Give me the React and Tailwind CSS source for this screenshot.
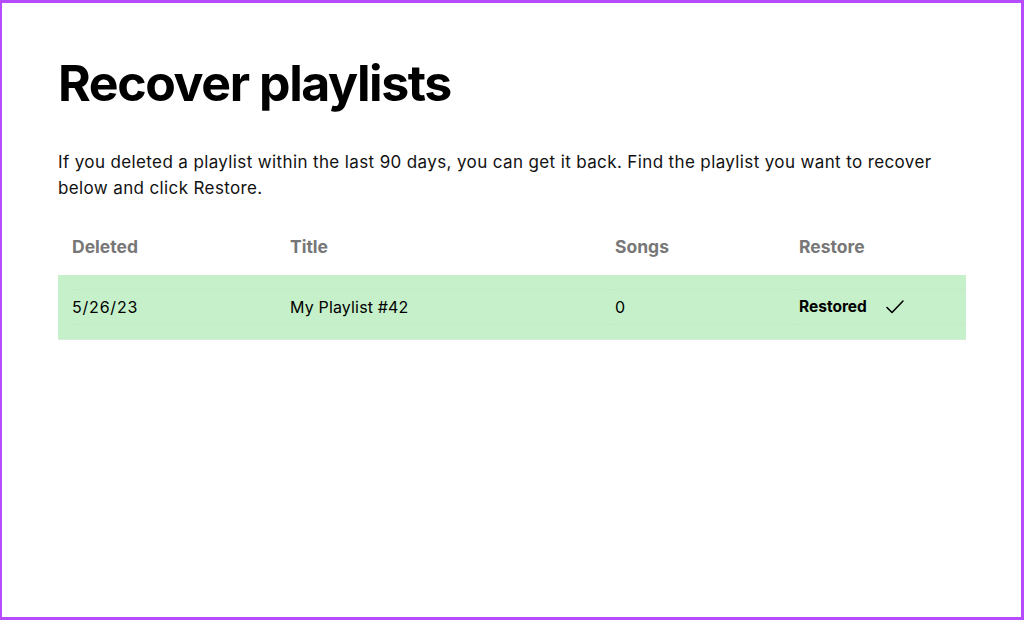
import React from 'react';

const rows = [
  { deleted: '5/26/23', title: 'My Playlist #42', songs: '0' },
];

const CheckIcon = () => (
  <svg width="20" height="16" viewBox="0 0 20 16" fill="none" stroke="#000" strokeWidth="1.6" strokeLinecap="round" strokeLinejoin="round">
    <path d="M2 8.5l5 5L18 2" />
  </svg>
);

const App = () => {
  return (
    <div className="h-[620px] w-[1024px] overflow-hidden bg-white border-[3px] border-l-2 border-[#b54cff] text-black" style={{ fontFamily: 'Inter, "Noto Sans", sans-serif' }}>
      <div className="pl-[56px] pr-[55px] pt-[50px]">
        <h1 className="text-[50px] font-bold leading-[60px] tracking-[-0.028em]">Recover playlists</h1>

        <p className="mt-[36px] text-[17px] leading-[26px] text-[#111] tracking-[0.022em]">
          If you deleted a playlist within the last 90 days, you can get it back. Find the playlist you want to recover below and click Restore.
        </p>

        <div className="mt-[18px]">
          <div className="grid grid-cols-[218px_325px_184px_1fr] pl-[14px] h-[56px] items-center text-[17.5px] font-bold text-[#777]">
            <div>Deleted</div>
            <div>Title</div>
            <div>Songs</div>
            <div>Restore</div>
          </div>
          {rows.map((row) => (
            <div key={row.title} className="bg-[#c6f0c9] border-b border-dotted border-[#e6eae6]">
              <div className="grid grid-cols-[218px_325px_184px_1fr] pl-[14px] h-[64px] items-center text-[16px] leading-[24px]">
                <div className="border-y border-dotted border-[#c0e8c3] py-[5px] tracking-[0.05em]">{row.deleted}</div>
                <div className="border-y border-dotted border-[#c0e8c3] py-[5px] tracking-[0.01em]">{row.title}</div>
                <div className="border-y border-dotted border-[#c0e8c3] py-[5px]">{row.songs}</div>
                <div className="border-y border-dotted border-[#c0e8c3] py-[5px] flex items-center gap-[18px] font-bold text-[15.5px]">
                  <span>Restored</span>
                  <CheckIcon />
                </div>
              </div>
            </div>
          ))}
        </div>
      </div>
    </div>
  );
};

export default App;
